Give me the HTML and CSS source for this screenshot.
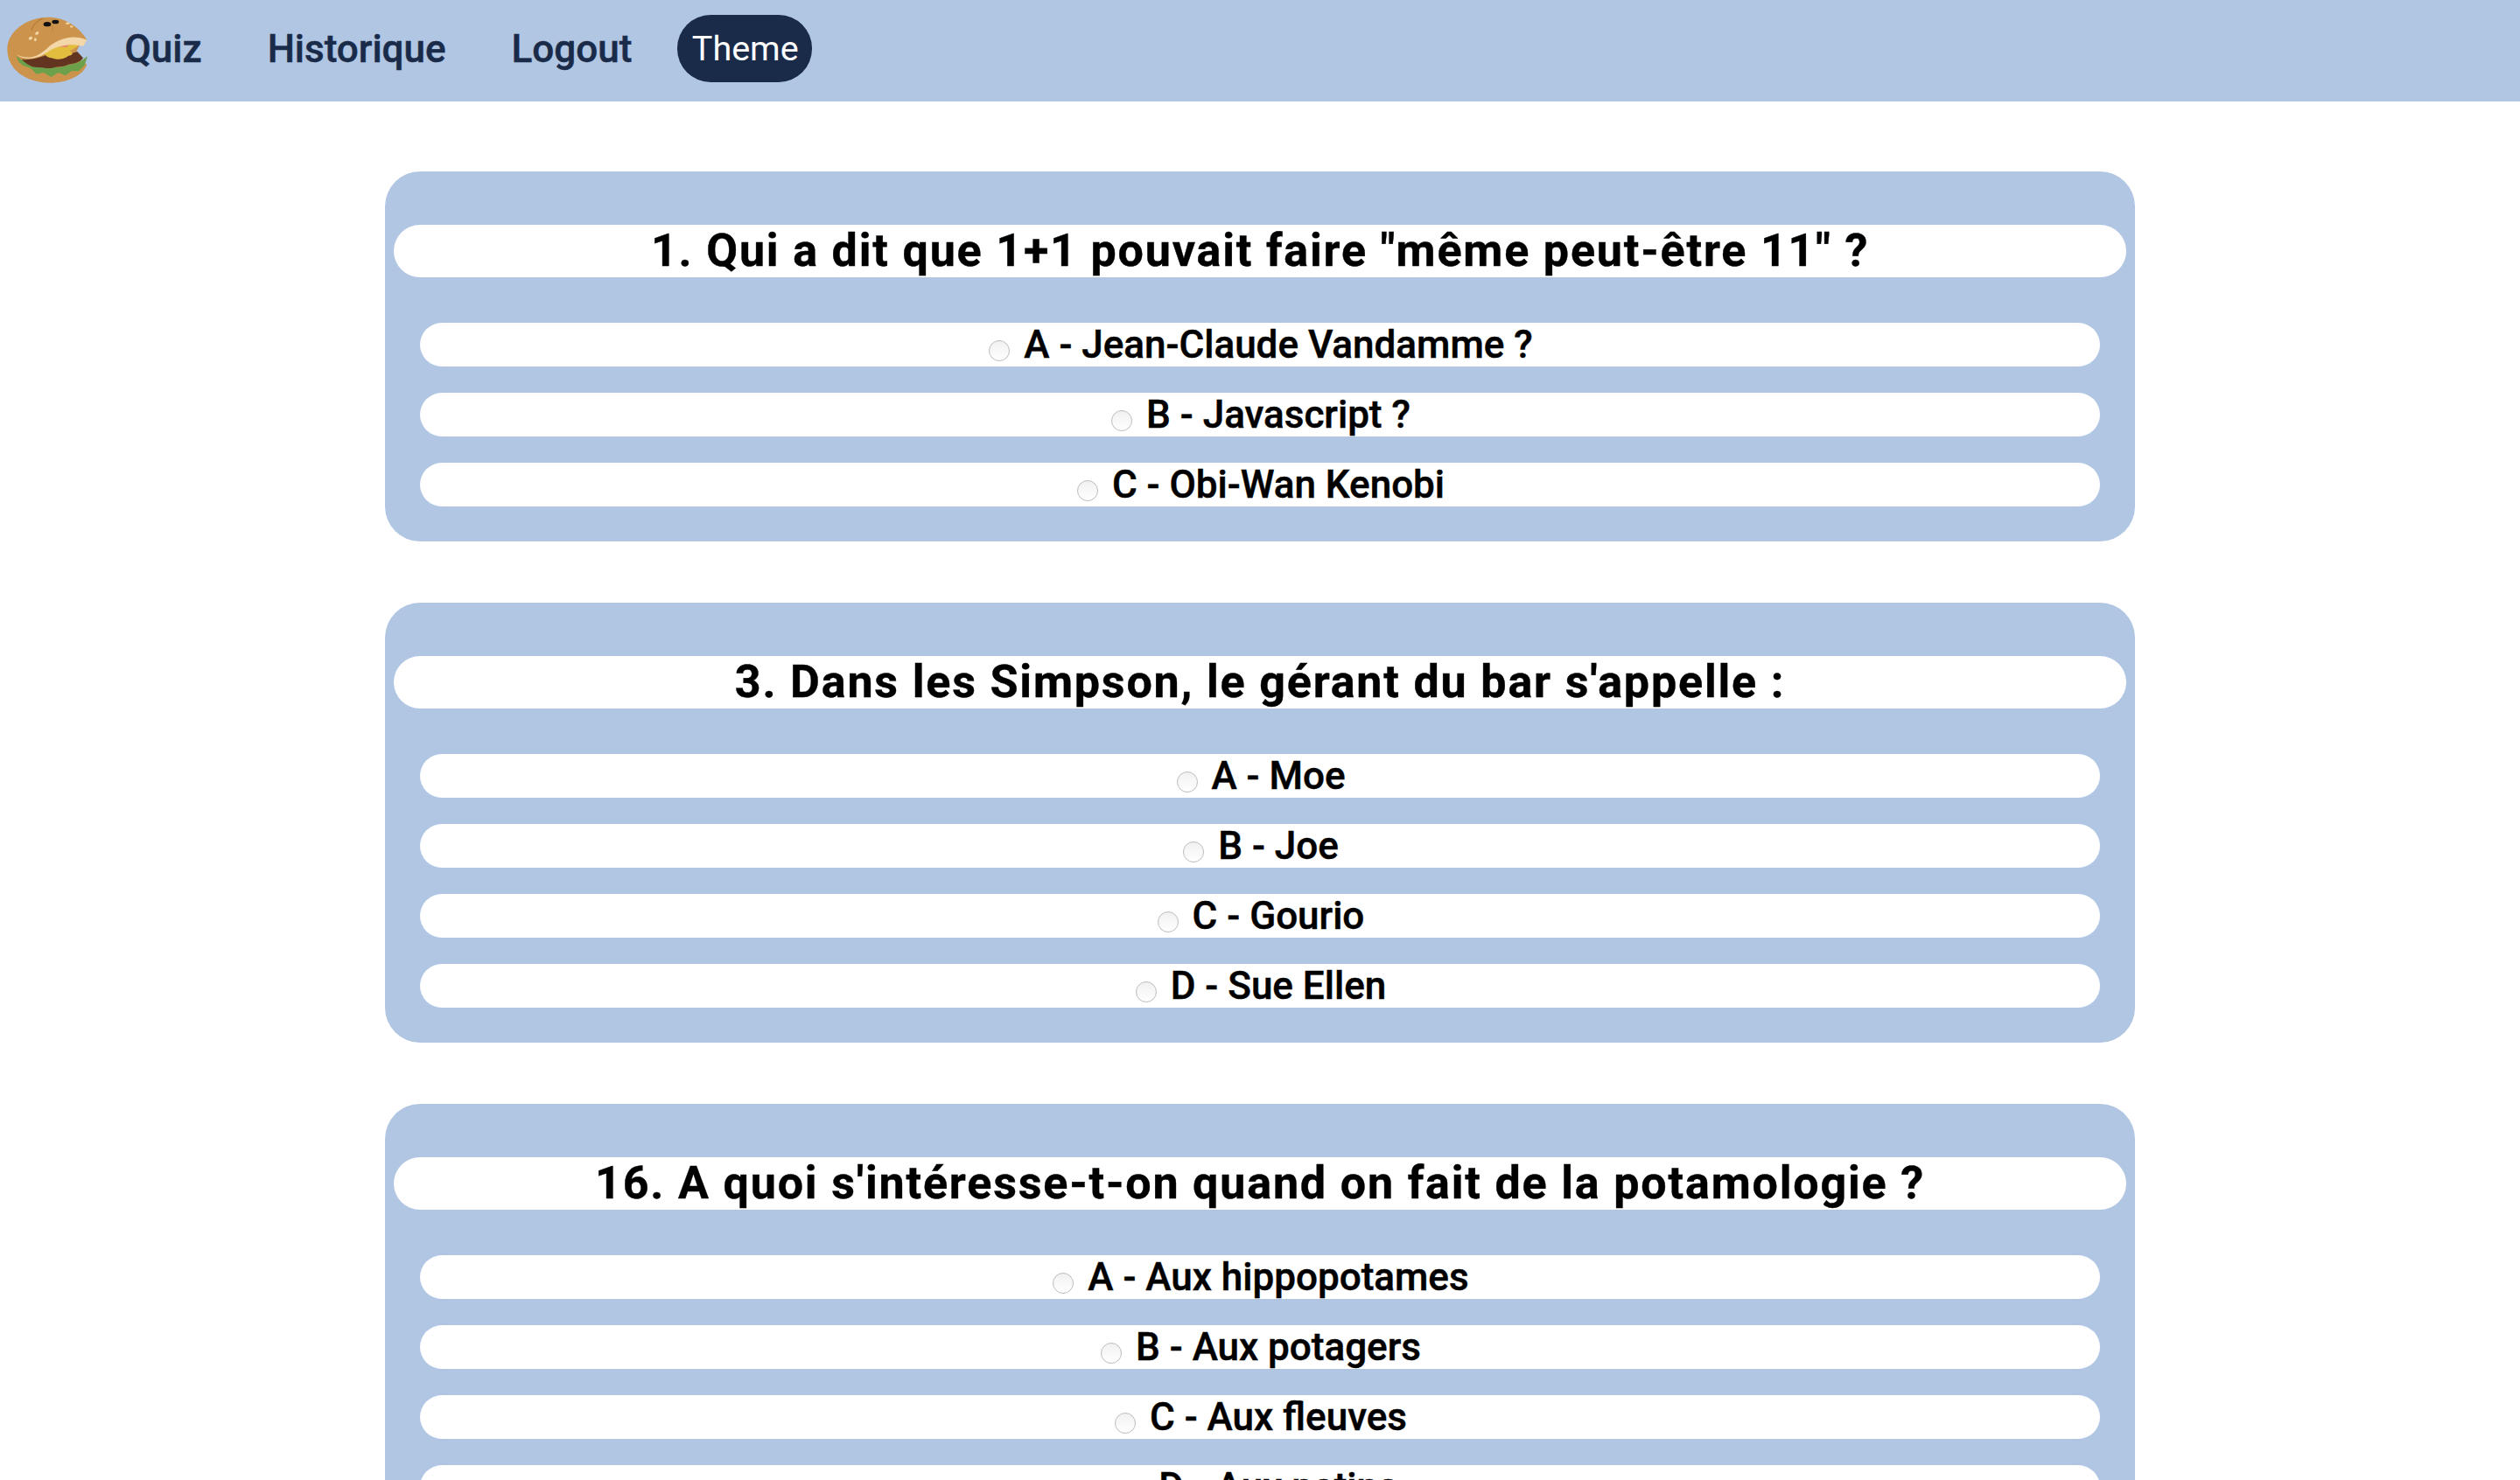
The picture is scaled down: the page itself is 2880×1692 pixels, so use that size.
FILE: index.html
```html
<!DOCTYPE html>
<html lang="fr">
<head>
  <meta charset="UTF-8">
  <title>Quiz</title>
  <link rel="stylesheet" href="styles.css">
</head>
<body>
  <nav class="navbar">
    <a class="logo" href="#">
      <svg viewBox="0 0 360 330" width="120" height="110">
        <path d="M298 128C270 80 220 50 165 50C90 50 25 100 25 160C25 230 90 275 170 275C230 275 285 250 298 212L255 185L270 150Z" fill="#cc934c"/>
        <path d="M55 183L85 203L120 213L200 223L270 205L285 195L300 184L290 215L270 235L245 235L225 250L200 240L175 255L150 240L125 245L105 225L80 216L65 205Z" fill="#6ca04a"/>
        <path d="M75 195C100 197 130 192 165 178L200 188L265 168L285 190C275 205 255 210 235 212C215 222 195 218 178 224C160 228 145 220 130 222C110 222 90 212 75 195Z" fill="#633520"/>
        <path d="M150 172C165 155 200 145 270 143C268 152 250 158 240 165C252 172 250 182 235 182C220 195 195 198 178 190C165 190 155 182 150 172Z" fill="#e3bd3e"/>
        <path d="M182 150C195 140 215 132 230 128L232 152Z" fill="#e8806c"/>
        <path d="M55 178C95 195 125 190 160 158C200 122 250 108 298 128L285 150C250 140 205 145 170 165C130 195 85 200 55 178Z" fill="#f3d7a8"/>
        <ellipse cx="162" cy="74" rx="13" ry="8" fill="#111"/>
        <ellipse cx="190" cy="66" rx="12" ry="7" fill="#111"/>
        <path d="M108 95C112 78 128 62 146 54" fill="none" stroke="#a9702f" stroke-width="3"/>
        <path d="M176 76C182 85 182 92 178 96" fill="none" stroke="#b47c38" stroke-width="2"/>
        <ellipse cx="232" cy="71" rx="7" ry="3.5" fill="#f1d6a6"/>
        <ellipse cx="245" cy="82" rx="5" ry="3.5" fill="#f1d6a6"/>
        <ellipse cx="127" cy="105" rx="7" ry="5" fill="#f1d6a6" transform="rotate(-35 127 105)"/>
        <ellipse cx="105" cy="122" rx="7" ry="5" fill="#f1d6a6" transform="rotate(-35 105 122)"/>
        <ellipse cx="121" cy="127" rx="4" ry="6" fill="#f1d6a6"/>
      </svg>
    </a>
    <a class="nav-link" href="#">Quiz</a>
    <a class="nav-link" href="#">Historique</a>
    <a class="nav-link" href="#">Logout</a>
    <button class="theme-btn">Theme</button>
  </nav>

  <main class="quiz">
    <section class="question">
      <h2>1. Qui a dit que 1+1 pouvait faire "même peut-être 11" ?</h2>
      <label class="answer"><input type="radio" name="q1"> A - Jean-Claude Vandamme ?</label>
      <label class="answer"><input type="radio" name="q1"> B - Javascript ?</label>
      <label class="answer"><input type="radio" name="q1"> C - Obi-Wan Kenobi</label>
    </section>

    <section class="question">
      <h2>3. Dans les Simpson, le gérant du bar s'appelle :</h2>
      <label class="answer"><input type="radio" name="q3"> A - Moe</label>
      <label class="answer"><input type="radio" name="q3"> B - Joe</label>
      <label class="answer"><input type="radio" name="q3"> C - Gourio</label>
      <label class="answer"><input type="radio" name="q3"> D - Sue Ellen</label>
    </section>

    <section class="question">
      <h2>16. A quoi s'intéresse-t-on quand on fait de la potamologie ?</h2>
      <label class="answer"><input type="radio" name="q16"> A - Aux hippopotames</label>
      <label class="answer"><input type="radio" name="q16"> B - Aux potagers</label>
      <label class="answer"><input type="radio" name="q16"> C - Aux fleuves</label>
      <label class="answer"><input type="radio" name="q16"> D - Aux patins</label>
    </section>
  </main>
</body>
</html>
```

FILE: styles.css
```css
html, body {
  height: 100%;
  overflow: hidden;
}
body {
  margin: 0;
  font-family: Roboto, "Liberation Sans", sans-serif;
  background: #fff;
  color: #000;
}
.navbar {
  display: flex;
  align-items: center;
  height: 116px;
  background: #b0c6e2;
}
.logo {
  display: block;
  width: 120px;
  height: 110px;
  margin-right: -15px;
}
.nav-link {
  padding: 0 37.5px 4px;
  font-size: 44px;
  font-weight: 500;
  -webkit-text-stroke: 0.5px;
  color: #1a2b4a;
  text-decoration: none;
}
.theme-btn {
  height: 77px;
  margin: 0 0 5px 14px;
  padding: 0 15px 0 17px;
  border: none;
  border-radius: 38px;
  background: #1a2b4a;
  color: #fff;
  font-family: inherit;
  font-size: 39.5px;
}
.quiz {
  width: 2000px;
  margin: 80px auto 0;
}
.question {
  margin-bottom: 70px;
  padding: 61px 10px 40px;
  border-radius: 40px;
  background: #b0c6e2;
}
.question h2 {
  height: 60px;
  margin: 0 0 52px;
  border-radius: 30px;
  background: #fff;
  font-size: 52px;
  font-weight: 700;
  -webkit-text-stroke: 0.4px;
  line-height: 60px;
  letter-spacing: 1.83px;
  text-align: center;
}
.answer {
  display: block;
  height: 50px;
  margin: 0 30px 30px;
  padding-left: 2px;
  border-radius: 25px;
  background: #fff;
  font-size: 44px;
  font-weight: 500;
  -webkit-text-stroke: 0.5px;
  line-height: 50px;
  text-align: center;
}
.answer:last-child {
  margin-bottom: 0;
}
.answer input {
  appearance: none;
  width: 24px;
  height: 24px;
  margin: 0 5px 0 0;
  border: 1.5px solid #bcbcbc;
  border-radius: 50%;
  background: linear-gradient(#f1f1f1, #fff);
  vertical-align: -4px;
}
```
